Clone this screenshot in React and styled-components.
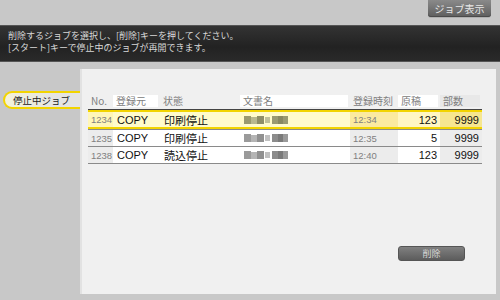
import React from "react";
import styled, { createGlobalStyle } from "styled-components";

const GlobalStyle = createGlobalStyle`
  html, body {
    margin: 0;
    padding: 0;
    background: #c8c8c8;
  }
  body {
    font-family: "Noto Sans CJK JP", "Noto Sans", sans-serif;
  }
`;

const Screen = styled.div`
  width: 500px;
  height: 300px;
  display: flex;
  flex-direction: column;
  background: #c8c8c8;
  overflow: hidden;
`;

const TopBar = styled.div`
  height: 25px;
  display: flex;
  justify-content: flex-end;
  align-items: flex-start;
  padding-right: 9px;
`;

const TopButton = styled.button`
  width: 63px;
  height: 17px;
  border: none;
  border-radius: 0 0 3px 3px;
  background: linear-gradient(#8a8a8a, #5e5e5e);
  box-shadow: inset 0 -1px 0 #4a4a4a, 0 1px 0 #b0b0b0;
  color: #e8e8e8;
  font-family: inherit;
  font-size: 10px;
  padding: 0;
`;

const Banner = styled.div`
  height: 37px;
  box-sizing: border-box;
  padding: 4px 8px;
  background: linear-gradient(#333333, #222222 60%, #2a2a2a);
  border-top: 1px solid #555;
  border-bottom: 1px solid #555;
  color: #d8d8d8;
  font-size: 9px;
  line-height: 12px;
`;

const Line = styled.div`
  height: 12px;
  white-space: nowrap;
`;

const Main = styled.div`
  flex: 1;
  display: flex;
  padding-top: 7px;
`;

const Side = styled.div`
  width: 80px;
  padding-top: 22px;
  padding-left: 3px;
  box-sizing: border-box;
`;

const Tab = styled.div`
  height: 18px;
  box-sizing: border-box;
  border: 2px solid #f2d400;
  border-right: none;
  border-radius: 9px 0 0 9px;
  background: linear-gradient(90deg, #f4f2d8, #e4e4e4 70%);
  font-size: 9.5px;
  line-height: 14px;
  padding-left: 8px;
  color: #222;
`;

const Panel = styled.div`
  width: 416px;
  height: 225px;
  box-sizing: border-box;
  background: #f0f0f0;
  border-left: 2px solid #e2e2e2;
  display: flex;
  flex-direction: column;
  padding: 26px 0 33px 6px;
`;

const Table = styled.div`
  width: 394px;
  display: flex;
  flex-direction: column;
  border-bottom: 1px solid #8a8a8a;
`;

const cols = [25, 47, 80, 110, 48, 42, 42];

const HeadRow = styled.div`
  display: flex;
  height: 12px;
  margin-bottom: 2px;
`;

const HeadCell = styled.div`
  width: ${(p) => p.$w - 2}px;
  margin-right: 2px;
  box-sizing: border-box;
  padding-left: 3px;
  font-size: 10px;
  line-height: 12px;
  color: #808080;
  background: ${(p) => p.$bg || "transparent"};
`;

const Row = styled.div`
  display: flex;
  height: ${(p) => (p.$sel ? 20 : 17)}px;
  box-sizing: border-box;
  border-top: 1px solid ${(p) => (p.$sel ? "#444" : "#8a8a8a")};
  border-bottom: ${(p) => (p.$sel ? "2px solid #f2d400" : "none")};
  box-shadow: ${(p) => (p.$sel ? "inset 0 2px 0 #f2d400, inset 2px 0 0 #f2d400, inset -2px 0 0 #f2d400" : "none")};
  padding-top: ${(p) => (p.$sel ? 2 : 0)}px;
  background: ${(p) => (p.$sel ? "#fffbcc" : "#fff")};
`;

const Cell = styled.div`
  width: ${(p) => p.$w}px;
  display: flex;
  align-items: center;
  justify-content: ${(p) => (p.$right ? "flex-end" : "flex-start")};
  box-sizing: border-box;
  padding: ${(p) => (p.$right ? "0 3px 0 0" : `0 0 0 ${p.$light ? 3 : 4}px`)};
  font-size: ${(p) => (p.$light ? 9.5 : 11)}px;
  color: ${(p) => (p.$light ? "#808080" : "#111")};
  background: ${(p) => p.$bg || "transparent"};
  font-family: ${(p) => (p.$latin ? '"Liberation Sans", sans-serif' : "inherit")};
`;

const Footer = styled.div`
  margin-top: auto;
  display: flex;
  justify-content: flex-end;
  padding-right: 31px;
`;

const DeleteButton = styled.button`
  width: 67px;
  height: 15px;
  border: 1px solid #555;
  border-radius: 3px;
  background: linear-gradient(#808080, #5c5c5c);
  color: #d6d6d6;
  font-family: inherit;
  font-size: 9px;
  line-height: 11px;
  padding: 0;
`;

const Blur = ({ id, tint }) => (
  <svg width="46" height="12" viewBox="0 0 46 12">
    <defs>
      <filter id={id}>
        <feGaussianBlur stdDeviation="0.6" />
      </filter>
    </defs>
    <g filter={`url(#${id})`}>
      <rect x="0" y="2" width="7" height="8" fill={tint ? "#9a9a70" : "#9a9a9a"} />
      <rect x="7" y="3" width="6" height="7" fill={tint ? "#b8b890" : "#b4b4b4"} />
      <rect x="13" y="2" width="7" height="8" fill={tint ? "#8e8e68" : "#909090"} />
      <rect x="21" y="3" width="5" height="6" fill={tint ? "#c0c09a" : "#c0c0c0"} />
      <rect x="28" y="2" width="6" height="8" fill={tint ? "#9a9a72" : "#8c8c8c"} />
      <rect x="34" y="2" width="5" height="8" fill={tint ? "#888862" : "#7a7a7a"} />
      <rect x="39" y="2" width="5" height="8" fill={tint ? "#9a9a72" : "#9a9a9a"} />
    </g>
  </svg>
);

const jobs = [
  { no: "1234", src: "COPY", state: "印刷停止", time: "12:34", orig: "123", copies: "9999", sel: true },
  { no: "1235", src: "COPY", state: "印刷停止", time: "12:35", orig: "5", copies: "9999" },
  { no: "1238", src: "COPY", state: "読込停止", time: "12:40", orig: "123", copies: "9999" },
];

const headers = [
  { t: "No.", bg: null },
  { t: "登録元", bg: "#fff" },
  { t: "状態", bg: null },
  { t: "文書名", bg: "#fff" },
  { t: "登録時刻", bg: null },
  { t: "原稿", bg: "#fff" },
  { t: "部数", bg: "#e8e8e8" },
];

export default function App() {
  return (
    <Screen>
      <GlobalStyle />
      <TopBar>
        <TopButton>ジョブ表示</TopButton>
      </TopBar>
      <Banner>
        <Line>削除するジョブを選択し、[削除]キーを押してください。</Line>
        <Line>[スタート]キーで停止中のジョブが再開できます。</Line>
      </Banner>
      <Main>
        <Side>
          <Tab>停止中ジョブ</Tab>
        </Side>
        <Panel>
          <Table>
            <HeadRow>
              {headers.map((h, i) => (
                <HeadCell key={h.t} $w={cols[i]} $bg={h.bg}>
                  {h.t}
                </HeadCell>
              ))}
            </HeadRow>
            {jobs.map((j, i) => (
              <Row key={j.no} $sel={j.sel}>
                <Cell $w={cols[0]} $light $latin $bg={j.sel ? "#fff6b8" : "#ececec"}>
                  {j.no}
                </Cell>
                <Cell $w={cols[1]} $latin>
                  {j.src}
                </Cell>
                <Cell $w={cols[2]}>{j.state}</Cell>
                <Cell $w={cols[3]}>
                  <Blur id={`b${i}`} tint={j.sel} />
                </Cell>
                <Cell $w={cols[4]} $light $latin $bg={j.sel ? "#fbeaa0" : "#ececec"}>
                  {j.time}
                </Cell>
                <Cell $w={cols[5]} $right $latin $bg={j.sel ? "#fff6c4" : null}>
                  {j.orig}
                </Cell>
                <Cell $w={cols[6]} $right $latin $bg={j.sel ? "#f6e690" : "#ececec"}>
                  {j.copies}
                </Cell>
              </Row>
            ))}
          </Table>
          <Footer>
            <DeleteButton>削除</DeleteButton>
          </Footer>
        </Panel>
      </Main>
    </Screen>
  );
}
